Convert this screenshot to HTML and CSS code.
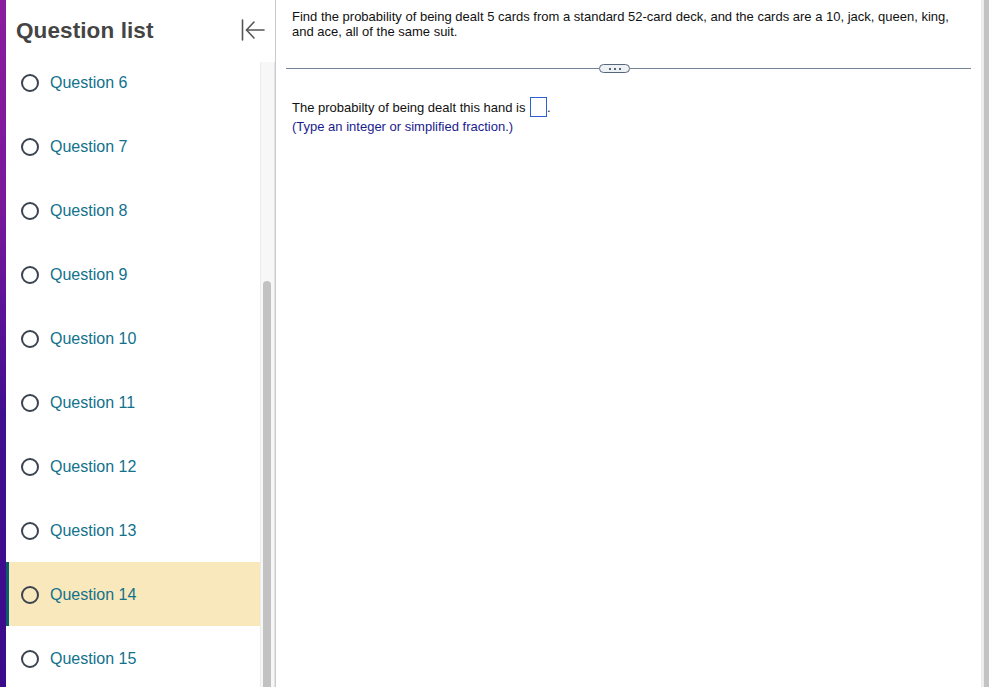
FILE: index.html
```html
<!DOCTYPE html>
<html lang="en">
<head>
<meta charset="utf-8">
<title>Question list</title>
<link rel="stylesheet" href="styles.css">
</head>
<body>
<div class="stripe"></div>
<aside class="sidebar">
  <header class="sidebar-header">
    <h1 class="sidebar-title">Question list</h1>
    <button class="collapse-btn" aria-label="Collapse question list">
      <svg width="24" height="22" viewBox="0 0 24 22" fill="none" stroke="#555" stroke-width="1.6" stroke-linecap="round" stroke-linejoin="round">
        <line x1="1.5" y1="1" x2="1.5" y2="21"/>
        <line x1="5.5" y1="11" x2="23" y2="11"/>
        <polyline points="13,3 5.5,11 13,19"/>
      </svg>
    </button>
  </header>
  <div class="sidebar-body">
    <ul class="qlist">
      <li class="qitem"><span class="radio"></span><span class="qlabel">Question 6</span></li>
      <li class="qitem"><span class="radio"></span><span class="qlabel">Question 7</span></li>
      <li class="qitem"><span class="radio"></span><span class="qlabel">Question 8</span></li>
      <li class="qitem"><span class="radio"></span><span class="qlabel">Question 9</span></li>
      <li class="qitem"><span class="radio"></span><span class="qlabel">Question 10</span></li>
      <li class="qitem"><span class="radio"></span><span class="qlabel">Question 11</span></li>
      <li class="qitem"><span class="radio"></span><span class="qlabel">Question 12</span></li>
      <li class="qitem"><span class="radio"></span><span class="qlabel">Question 13</span></li>
      <li class="qitem active"><span class="radio"></span><span class="qlabel">Question 14</span></li>
      <li class="qitem"><span class="radio"></span><span class="qlabel">Question 15</span></li>
    </ul>
    <div class="track"><div class="thumb"></div></div>
  </div>
</aside>
<main class="main">
  <p class="question">Find the probability of being dealt 5 cards from a standard 52-card deck, and the cards are a 10, jack, queen, king, and ace, all of the same suit.</p>
  <div class="divider">
    <span class="rule rule-left"></span>
    <span class="pill"><i></i><i></i><i></i></span>
    <span class="rule"></span>
  </div>
  <div class="answer">The probabilty of being dealt this hand is <span class="answer-box"></span>.</div>
  <div class="hint">(Type an integer or simplified fraction.)</div>
</main>
<div class="page-scroll"></div>
</body>
</html>
```

FILE: styles.css
```css
html, body {
  margin: 0;
  padding: 0;
}
body {
  display: flex;
  height: 687px;
  overflow: hidden;
  background: #fff;
  font-family: "Liberation Sans", Arial, sans-serif;
}
.stripe {
  width: 6px;
  flex: none;
  background: linear-gradient(#8b1c9d 0%, #7a189b 30%, #5d1397 45%, #420e90 60%, #3b0b8b 100%);
}
.sidebar {
  width: 269px;
  flex: none;
  border-right: 1px solid #cacace;
  display: flex;
  flex-direction: column;
}
.sidebar-header {
  height: 50px;
  display: flex;
  justify-content: space-between;
  align-items: flex-start;
  padding: 0 10px 0 10px;
  box-sizing: border-box;
  flex: none;
}
.sidebar-title {
  margin: 0;
  padding-top: 18px;
  font-size: 22.5px;
  line-height: 26px;
  font-weight: bold;
  color: #444;
  letter-spacing: 0.1px;
}
.collapse-btn {
  margin: 19px 0 0 0;
  padding: 0;
  border: 0;
  background: none;
  width: 24px;
  height: 22px;
}
.collapse-btn svg {
  display: block;
}
.sidebar-body {
  flex: 1;
  display: flex;
  min-height: 0;
}
.qlist {
  list-style: none;
  margin: 0;
  padding: 0;
  width: 254px;
  flex: none;
}
.qitem {
  height: 64px;
  box-sizing: border-box;
  padding-top: 2px;
  display: flex;
  align-items: center;
  gap: 11px;
  padding-left: 12px;
  border-left: 3px solid transparent;
}
.qitem.active {
  background: #f9e8bc;
  border-left-color: #0b5c6d;
}
.radio {
  width: 14px;
  height: 14px;
  border: 2px solid #3b4250;
  border-radius: 50%;
  flex: none;
}
.qlabel {
  font-size: 16px;
  color: #12718b;
}
.track {
  margin-top: 12px;
  width: 15px;
  flex: none;
  background: #f7f7f7;
  border-left: 1px solid #ececec;
  border-right: 1px solid #e4e4e4;
  box-sizing: border-box;
  padding-top: 219px;
}
.thumb {
  margin-left: 2px;
  width: 8px;
  height: 420px;
  background: #c2c2c2;
  border-radius: 4px;
}
.main {
  flex: 1;
  display: flex;
  flex-direction: column;
  min-width: 0;
}
.question {
  margin: 0;
  padding: 9px 16px 0;
  font-size: 13px;
  line-height: 15px;
  color: #111;
  max-width: 662px;
}
.divider {
  margin: 25px 10px 0;
  height: 9px;
  display: flex;
  align-items: center;
}
.rule {
  flex: 1;
  height: 1px;
  background: #74859a;
}
.rule-left {
  flex: none;
  width: 313px;
}
.pill {
  width: 29px;
  height: 7px;
  border: 1px solid #56677c;
  border-radius: 5px;
  background: #eef1f4;
  display: flex;
  justify-content: center;
  align-items: center;
  gap: 3px;
}
.pill i {
  width: 2px;
  height: 2px;
  background: #56677c;
}
.answer {
  margin: 24px 16px 0;
  height: 20px;
  display: flex;
  align-items: center;
  font-size: 13px;
  color: #111;
  white-space: pre;
}
.answer-box {
  width: 15px;
  height: 18px;
  border: 1px solid #2b61d4;
  margin-left: 1px;
}
.hint {
  margin: 2px 16px 0;
  font-size: 13px;
  line-height: 15px;
  color: #1b1b8e;
}
.page-scroll {
  width: 5px;
  flex: none;
  background: #c3c3c3;
  border-left: 3px solid #ededed;
}
```
